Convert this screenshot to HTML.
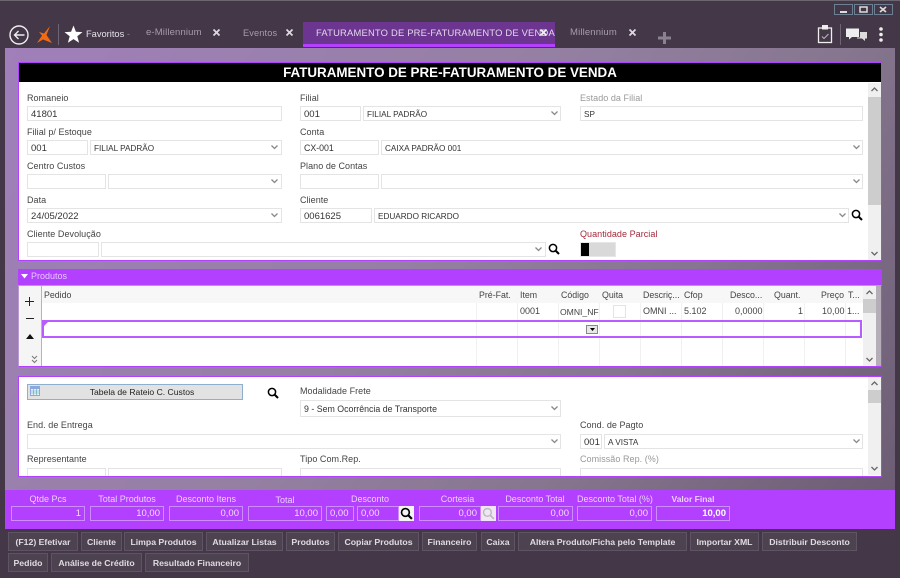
<!DOCTYPE html>
<html><head><meta charset="utf-8"><style>
html,body{margin:0;padding:0;width:900px;height:578px;overflow:hidden;background:#433748}
body{position:relative;font-family:"Liberation Sans",sans-serif;font-size:9.5px;color:#333}
div,span.a,svg{position:absolute;box-sizing:border-box}
.t{white-space:nowrap;line-height:12px;height:12px}
.lb{color:#444;font-size:9px;letter-spacing:.05px}
.f{height:15px;border:1px solid #e4e4e4;background:#fff;line-height:15px;padding-left:3px;white-space:nowrap;overflow:hidden;color:#333}
.k{font-size:8.2px}
.tab{color:#a79dac;letter-spacing:.15px;top:27px}
.bf{top:506px;height:15px;border:1px solid #cf8cff;background:#b340ff;color:#f2dcff;text-align:right;padding-right:3px;line-height:14px}
.bl{top:493px;color:#ecd0ff;text-align:center;font-size:9px}
.b{height:19px;background:#4c4250;border:1px solid #5e5463;color:#e0dbe2;font-weight:bold;text-align:center;line-height:18px;white-space:nowrap;font-size:8.7px}
.c{top:303px;width:1px;height:63px;background:#f1f1f1}
.h{top:289px;color:#444;font-size:8.8px}
.r{top:305px;color:#444;font-size:9px}
.ch{width:7px;height:7px}
</style></head><body>
<div style="left:0;top:0;width:900px;height:1px;background:#6b6670"></div>
<svg style="left:834px;top:4px" width="59" height="11" viewBox="0 0 59 11"><g fill="none" stroke="#6d7f93"><rect x=".5" y=".5" width="18" height="10"/><rect x="20.5" y=".5" width="18" height="10"/><rect x="40.5" y=".5" width="18" height="10"/></g><rect x="6" y="7" width="7" height="2" fill="#ddd"/><rect x="26" y="3" width="7" height="5" fill="none" stroke="#ddd" stroke-width="1.5"/><path d="M46 3l6 5M52 3l-6 5" stroke="#ddd" stroke-width="1.7"/></svg>

<svg style="left:9px;top:24px" width="22" height="22" viewBox="0 0 22 22"><circle cx="10" cy="11" r="9" fill="none" stroke="#eee" stroke-width="1.4"/><path d="M15.500 11H5.500M9.500 7l-4 4 4 4" fill="none" stroke="#eee" stroke-width="1.400"/></svg>
<svg style="left:36px;top:25px" width="17" height="19" viewBox="0 0 17 19"><path d="M14 1L10.500 10 16 18 7 14.500 1 18 6 10.500 3 7 8 8.500z" fill="#f26a12"/></svg>
<div style="left:58px;top:24px;width:1px;height:21px;background:#6e6474"></div>
<svg style="left:64px;top:25px" width="19" height="19" viewBox="0 0 19 19"><path d="M9.500 0.500l2.400 6.300 6.600.3-5.200 4.200 1.800 6.500-5.600-3.700-5.600 3.700 1.800-6.500L.5 7.100l6.600-.3z" fill="#fff"/></svg>
<div class="t" style="left:86px;top:28px;color:#e6e3e8;font-size:9.3px">Favoritos <span style="color:#8c8392">-</span></div>
<div class="t tab" style="left:146px">e-Millennium</div>
<svg style="left:212px;top:28px" width="10" height="10"><path d="M1.500 1.500l6 6M7.500 1.500l-6 6" stroke="#dcd9de" stroke-width="1.800"/></svg>
<div class="t tab" style="left:243px;font-size:9.2px">Eventos</div>
<svg style="left:285px;top:28px" width="10" height="10"><path d="M1.500 1.500l6 6M7.500 1.500l-6 6" stroke="#dcd9de" stroke-width="1.800"/></svg>
<div style="left:303px;top:22px;width:252px;height:25px;background:#6b3590;border-bottom:3px solid #b340ff"></div>
<div class="t" style="left:316px;top:27px;color:#e3d8ea;font-size:9.4px;letter-spacing:.2px">FATURAMENTO DE PRE-FATURAMENTO DE VENDA</div>
<svg style="left:539px;top:28px" width="10" height="10"><path d="M1.500 1.500l6 6M7.500 1.500l-6 6" stroke="#eee" stroke-width="1.800"/></svg>
<div class="t tab" style="left:570px">Millennium</div>
<svg style="left:628px;top:28px" width="10" height="10"><path d="M1.500 1.500l6 6M7.500 1.500l-6 6" stroke="#dcd9de" stroke-width="1.800"/></svg>
<svg style="left:658px;top:32px" width="13" height="12"><path d="M6.500 0v12M0 6h13" stroke="#8b8290" stroke-width="3"/></svg>
<svg style="left:817px;top:24px" width="16" height="20" viewBox="0 0 16 20"><rect x="1.500" y="4" width="13" height="14.500" fill="none" stroke="#eee" stroke-width="1.300"/><rect x="5" y="1" width="6" height="4.500" fill="#eee"/><path d="M5 12.500l2 2L11.500 10" fill="none" stroke="#bbb"/></svg>
<div style="left:840px;top:24px;width:1px;height:21px;background:#6e6474"></div>
<svg style="left:846px;top:28px" width="21" height="14" viewBox="0 0 21 14"><path d="M0 0.500h13v8.500H6l-3 2.500V9H0z" fill="#eee"/><path d="M14 4h7v6.500h-2v2.500l-3-2.500h-5v-1h3z" fill="#ddd"/></svg>
<svg style="left:878px;top:27px" width="6" height="15"><circle cx="3" cy="2" r="1.800" fill="#eee"/><circle cx="3" cy="7.500" r="1.800" fill="#eee"/><circle cx="3" cy="13" r="1.800" fill="#eee"/></svg>

<div style="left:5px;top:48px;width:890px;height:442px;background:linear-gradient(125deg,#a07fba 0%,#9580a3 45%,#86768f 70%,#6c5d75 100%)"></div>

<!-- Panel 1 -->
<div style="left:18px;top:62px;width:864px;height:199px;background:#fff;border:1px solid #b340ff"></div>
<div class="t" style="left:19px;top:63px;width:862px;height:19px;background:#000;color:#fff;font-weight:bold;font-size:13.4px;line-height:20px;text-align:center">FATURAMENTO DE PRE-FATURAMENTO DE VENDA</div>

<div class="t lb" style="left:27px;top:92px">Romaneio</div>
<div class="f" style="left:27px;top:106px;width:255px">41801</div>
<div class="t lb" style="left:300px;top:92px">Filial</div>
<div class="f" style="left:300px;top:106px;width:61px">001</div>
<div class="f k" style="left:363px;top:106px;width:198px">FILIAL PADRÃO</div>
<div class="t lb" style="left:580px;top:92px;color:#999">Estado da Filial</div>
<div class="f k" style="left:580px;top:106px;width:283px">SP</div>

<div class="t lb" style="left:27px;top:126px">Filial p/ Estoque</div>
<div class="f" style="left:27px;top:140px;width:61px">001</div>
<div class="f k" style="left:90px;top:140px;width:192px">FILIAL PADRÃO</div>
<div class="t lb" style="left:300px;top:126px">Conta</div>
<div class="f k" style="left:300px;top:140px;width:79px;font-size:8.8px">CX-001</div>
<div class="f k" style="left:381px;top:140px;width:482px">CAIXA PADRÃO 001</div>

<div class="t lb" style="left:27px;top:160px">Centro Custos</div>
<div class="f" style="left:27px;top:174px;width:79px"></div>
<div class="f" style="left:108px;top:174px;width:174px"></div>
<div class="t lb" style="left:300px;top:160px">Plano de Contas</div>
<div class="f" style="left:300px;top:174px;width:79px"></div>
<div class="f" style="left:381px;top:174px;width:482px"></div>

<div class="t lb" style="left:27px;top:194px">Data</div>
<div class="f" style="left:27px;top:208px;width:255px">24/05/2022</div>
<div class="t lb" style="left:300px;top:194px">Cliente</div>
<div class="f" style="left:300px;top:208px;width:72px">0061625</div>
<div class="f k" style="left:374px;top:208px;width:475px">EDUARDO RICARDO</div>

<div class="t lb" style="left:27px;top:228px">Cliente Devolução</div>
<div class="f" style="left:27px;top:242px;width:72px"></div>
<div class="f" style="left:101px;top:242px;width:445px"></div>
<div class="t lb" style="left:580px;top:228px;color:#a32a3a">Quantidade Parcial</div>
<div style="left:580px;top:242px;width:36px;height:15px;background:#d9d9d9;border:1px solid #e6e6e6"></div>
<div style="left:581px;top:243px;width:8px;height:13px;background:#000"></div>

<svg class="ch" style="left:551px;top:110px"><path d="M.5 1.500L3.500 4.500 6.500 1.500" fill="none" stroke="#888" stroke-width="1.300"/></svg>
<svg class="ch" style="left:271px;top:144px"><path d="M.5 1.500L3.500 4.500 6.500 1.500" fill="none" stroke="#888" stroke-width="1.300"/></svg>
<svg class="ch" style="left:853px;top:144px"><path d="M.5 1.500L3.500 4.500 6.500 1.500" fill="none" stroke="#888" stroke-width="1.300"/></svg>
<svg class="ch" style="left:271px;top:178px"><path d="M.5 1.500L3.500 4.500 6.500 1.500" fill="none" stroke="#888" stroke-width="1.300"/></svg>
<svg class="ch" style="left:853px;top:178px"><path d="M.5 1.500L3.500 4.500 6.500 1.500" fill="none" stroke="#888" stroke-width="1.300"/></svg>
<svg class="ch" style="left:271px;top:212px"><path d="M.5 1.500L3.500 4.500 6.500 1.500" fill="none" stroke="#888" stroke-width="1.300"/></svg>
<svg class="ch" style="left:839px;top:212px"><path d="M.5 1.500L3.500 4.500 6.500 1.500" fill="none" stroke="#888" stroke-width="1.300"/></svg>
<svg class="ch" style="left:535px;top:246px"><path d="M.5 1.500L3.500 4.500 6.500 1.500" fill="none" stroke="#888" stroke-width="1.300"/></svg>
<svg style="left:851px;top:209px" width="12" height="12" viewBox="0 0 12 12"><circle cx="5" cy="5" r="3.600" fill="none" stroke="#000" stroke-width="1.500"/><path d="M7.500 7.500l3.500 3.500" stroke="#000" stroke-width="2"/></svg>
<svg style="left:548px;top:243px" width="12" height="12" viewBox="0 0 12 12"><circle cx="5" cy="5" r="3.600" fill="none" stroke="#000" stroke-width="1.500"/><path d="M7.500 7.500l3.500 3.500" stroke="#000" stroke-width="2"/></svg>

<div style="left:868px;top:83px;width:13px;height:177px;background:#f0f0f0"></div>
<div style="left:868px;top:97px;width:13px;height:108px;background:#cdcdcd"></div>
<svg class="ch" style="left:871px;top:86px"><path d="M.5 5L3.500 2 6.500 5" fill="none" stroke="#666" stroke-width="1.300"/></svg>
<svg class="ch" style="left:871px;top:250px"><path d="M.5 2L3.500 5 6.500 2" fill="none" stroke="#666" stroke-width="1.300"/></svg>

<!-- Products -->
<div style="left:18px;top:269px;width:864px;height:17px;background:#b340ff"></div>
<svg style="left:21px;top:274px" width="7" height="5"><path d="M0 0h7L3.500 4.500z" fill="#fff"/></svg>
<div class="t" style="left:31px;top:270px;color:#e6c8ff;font-size:9px">Produtos</div>
<div style="left:18px;top:285px;width:864px;height:82px;background:#fff;border:1px solid #b99ad0;border-right-color:#b340ff;border-bottom-color:#b340ff"></div>
<div style="left:19px;top:286px;width:22px;height:80px;background:#f5f5f5"></div>
<div style="left:41px;top:286px;width:1px;height:80px;background:#b5b5b5"></div>
<div style="left:42px;top:286px;width:821px;height:17px;background:#f7f7f7"></div>
<div class="c" style="left:476px"></div><div class="c" style="left:517px"></div><div class="c" style="left:558px"></div><div class="c" style="left:599px"></div><div class="c" style="left:640px"></div><div class="c" style="left:681px"></div><div class="c" style="left:722px"></div><div class="c" style="left:763px"></div><div class="c" style="left:804px"></div><div class="c" style="left:845px"></div>
<div class="t h" style="left:44px">Pedido</div><div class="t h" style="left:479px">Pré-Fat.</div><div class="t h" style="left:520px">Item</div><div class="t h" style="left:561px">Código</div><div class="t h" style="left:602px">Quita</div><div class="t h" style="left:643px">Descriç...</div><div class="t h" style="left:684px">Cfop</div><div class="t h" style="left:730px">Desco...</div><div class="t h" style="left:774px">Quant.</div><div class="t h" style="left:821px">Preço</div><div class="t h" style="left:848px">T...</div>
<div class="t r" style="left:520px">0001</div><div class="t r" style="left:560px;top:306px;font-size:8.6px">OMNI_NF</div>
<div style="left:613px;top:305px;width:13px;height:13px;border:1px solid #e4e4e4;background:#fff"></div>
<div class="t r" style="left:643px">OMNI ...</div><div class="t r" style="left:684px">5.102</div><div class="t r" style="left:735px">0,0000</div><div class="t r" style="left:798px">1</div><div class="t r" style="left:822px">10,00</div><div class="t r" style="left:847px">1...</div>
<div style="left:42px;top:320px;width:820px;height:18px;border:2px solid #b85cff"></div>
<svg style="left:44px;top:322px" width="4" height="4"><path d="M0 0h4L0 4z" fill="#b85cff"/></svg>
<div class="c" style="left:476px;top:322px;height:14px"></div><div class="c" style="left:517px;top:322px;height:14px"></div><div class="c" style="left:558px;top:322px;height:14px"></div><div class="c" style="left:599px;top:322px;height:14px"></div><div class="c" style="left:640px;top:322px;height:14px"></div><div class="c" style="left:681px;top:322px;height:14px"></div><div class="c" style="left:722px;top:322px;height:14px"></div><div class="c" style="left:763px;top:322px;height:14px"></div><div class="c" style="left:804px;top:322px;height:14px"></div><div class="c" style="left:845px;top:322px;height:14px"></div>
<div style="left:586px;top:325px;width:12px;height:9px;background:#e8e8e8;border:1px solid #888"></div>
<svg style="left:590px;top:328px" width="5" height="3"><path d="M0 0h5L2.500 3z" fill="#000"/></svg>
<svg style="left:25px;top:297px" width="9" height="9"><path d="M4.500 0v9M0 4.500h9" stroke="#222" stroke-width="1"/></svg>
<div style="left:26px;top:318px;width:8px;height:1px;background:#222"></div>
<svg style="left:26px;top:334px" width="8" height="5"><path d="M0 5L4 0l4 5z" fill="#111"/></svg>
<svg style="left:31px;top:355px" width="7" height="9"><path d="M1 1l2.500 2.500L6 1M1 5l2.500 2.500L6 5" fill="none" stroke="#777"/></svg>
<div style="left:863px;top:286px;width:13px;height:80px;background:#f0f0f0"></div>
<div style="left:863px;top:299px;width:13px;height:14px;background:#cdcdcd"></div>
<div style="left:876px;top:286px;width:5px;height:80px;background:#b5aeb8"></div>
<svg class="ch" style="left:866px;top:289px"><path d="M.5 5L3.500 2 6.500 5" fill="none" stroke="#666" stroke-width="1.300"/></svg>
<svg class="ch" style="left:866px;top:356px"><path d="M.5 2L3.500 5 6.500 2" fill="none" stroke="#666" stroke-width="1.300"/></svg>

<!-- Panel 3 -->
<div style="left:18px;top:376px;width:864px;height:101px;background:#fff;border:1px solid #b340ff"></div>
<div style="left:27px;top:384px;width:216px;height:16px;background:#e2e2e2;border:1px solid #8fb0cc;text-align:center;line-height:15px;color:#222;font-size:8.6px;padding-left:14px">Tabela de Rateio C. Custos</div>
<svg style="left:30px;top:386px" width="10" height="10"><rect width="10" height="10" fill="#8da8e0"/><rect x="1" y="3" width="8" height="6" fill="#e6f0ff"/><path d="M1 5h8M1 7h8M3.500 3v6M6.500 3v6" stroke="#5aa" stroke-width=".6"/></svg>
<svg style="left:267px;top:387px" width="12" height="12" viewBox="0 0 12 12"><circle cx="5" cy="5" r="3.600" fill="none" stroke="#000" stroke-width="1.500"/><path d="M7.500 7.500l3.500 3.500" stroke="#000" stroke-width="2"/></svg>
<div class="t lb" style="left:300px;top:385px">Modalidade Frete</div>
<div class="f" style="left:300px;top:400px;width:261px;height:17px;line-height:17px;font-size:8.8px">9 - Sem Ocorrência de Transporte</div>
<svg class="ch" style="left:551px;top:405px"><path d="M.5 1.500L3.500 4.500 6.500 1.500" fill="none" stroke="#888" stroke-width="1.300"/></svg>
<div class="t lb" style="left:27px;top:419px">End. de Entrega</div>
<div class="f" style="left:27px;top:434px;width:534px"></div>
<svg class="ch" style="left:551px;top:438px"><path d="M.5 1.500L3.500 4.500 6.500 1.500" fill="none" stroke="#888" stroke-width="1.300"/></svg>
<div class="t lb" style="left:580px;top:419px">Cond. de Pagto</div>
<div class="f" style="left:580px;top:434px;width:22px">001</div>
<div class="f k" style="left:604px;top:434px;width:259px">A VISTA</div>
<svg class="ch" style="left:853px;top:438px"><path d="M.5 1.500L3.500 4.500 6.500 1.500" fill="none" stroke="#888" stroke-width="1.300"/></svg>
<div class="t lb" style="left:27px;top:453px">Representante</div>
<div class="t lb" style="left:300px;top:453px">Tipo Com.Rep.</div>
<div class="t lb" style="left:580px;top:453px;color:#999">Comissão Rep. (%)</div>
<div class="f" style="left:27px;top:468px;width:79px;height:8px;border-bottom:0"></div>
<div class="f" style="left:108px;top:468px;width:174px;height:8px;border-bottom:0"></div>
<div class="f" style="left:300px;top:468px;width:261px;height:8px;border-bottom:0"></div>
<div class="f" style="left:580px;top:468px;width:283px;height:8px;border-bottom:0"></div>
<div style="left:868px;top:377px;width:13px;height:98px;background:#f0f0f0"></div>
<div style="left:868px;top:390px;width:13px;height:13px;background:#cdcdcd"></div>
<svg class="ch" style="left:871px;top:380px"><path d="M.5 5L3.500 2 6.500 5" fill="none" stroke="#666" stroke-width="1.300"/></svg>
<svg class="ch" style="left:871px;top:465px"><path d="M.5 2L3.500 5 6.500 2" fill="none" stroke="#666" stroke-width="1.300"/></svg>

<!-- Totals -->
<div style="left:5px;top:490px;width:890px;height:39px;background:#b340ff"></div>
<div class="t bl" style="left:11px;width:74px">Qtde Pcs</div>
<div class="t bl" style="left:90px;width:74px">Total Produtos</div>
<div class="t bl" style="left:169px;width:74px">Desconto Itens</div>
<div class="t bl" style="left:248px;width:74px;top:494px">Total</div>
<div class="t bl" style="left:326px;width:88px">Desconto</div>
<div class="t bl" style="left:419px;width:77px">Cortesia</div>
<div class="t bl" style="left:498px;width:74px">Desconto Total</div>
<div class="t bl" style="left:577px;width:75px">Desconto Total (%)</div>
<div class="t bl" style="left:656px;width:74px;font-weight:bold;font-size:8.500px">Valor Final</div>
<div class="bf" style="left:11px;width:74px">1</div>
<div class="bf" style="left:90px;width:74px">10,00</div>
<div class="bf" style="left:169px;width:74px">0,00</div>
<div class="bf" style="left:248px;width:74px">10,00</div>
<div class="bf" style="left:326px;width:28px;text-align:left;padding-left:3px">0,00</div>
<div class="bf" style="left:357px;width:42px;text-align:left;padding-left:3px">0,00</div>
<div style="left:399px;top:506px;width:15px;height:15px;background:#f4f4f4"></div>
<svg style="left:400px;top:507px" width="13" height="13" viewBox="0 0 12 12"><circle cx="5" cy="5" r="3.600" fill="none" stroke="#000" stroke-width="1.500"/><path d="M7.500 7.500l3.500 3.500" stroke="#000" stroke-width="2"/></svg>
<div class="bf" style="left:419px;width:62px">0,00</div>
<div style="left:481px;top:506px;width:15px;height:15px;background:#f0e6f6"></div>
<svg style="left:482px;top:507px" width="13" height="13" viewBox="0 0 12 12"><circle cx="5" cy="5" r="3.600" fill="none" stroke="#bbb" stroke-width="1.300"/><path d="M7.500 7.500l3.500 3.500" stroke="#bbb" stroke-width="1.500"/></svg>
<div class="bf" style="left:498px;width:75px">0,00</div>
<div class="bf" style="left:577px;width:75px">0,00</div>
<div class="bf" style="left:656px;width:74px;font-weight:bold;color:#fff">10,00</div>

<!-- Buttons -->
<div class="b" style="left:8px;top:532px;width:70px">(F12) Efetivar</div>
<div class="b" style="left:81px;top:532px;width:41px">Cliente</div>
<div class="b" style="left:124px;top:532px;width:79px">Limpa Produtos</div>
<div class="b" style="left:206px;top:532px;width:77px">Atualizar Listas</div>
<div class="b" style="left:286px;top:532px;width:49px">Produtos</div>
<div class="b" style="left:338px;top:532px;width:81px">Copiar Produtos</div>
<div class="b" style="left:422px;top:532px;width:55px">Financeiro</div>
<div class="b" style="left:481px;top:532px;width:34px">Caixa</div>
<div class="b" style="left:518px;top:532px;width:169px">Altera Produto/Ficha pelo Template</div>
<div class="b" style="left:690px;top:532px;width:69px">Importar XML</div>
<div class="b" style="left:762px;top:532px;width:95px">Distribuir Desconto</div>
<div class="b" style="left:8px;top:553px;width:40px">Pedido</div>
<div class="b" style="left:51px;top:553px;width:91px">Análise de Crédito</div>
<div class="b" style="left:145px;top:553px;width:104px">Resultado Financeiro</div>
</body></html>
